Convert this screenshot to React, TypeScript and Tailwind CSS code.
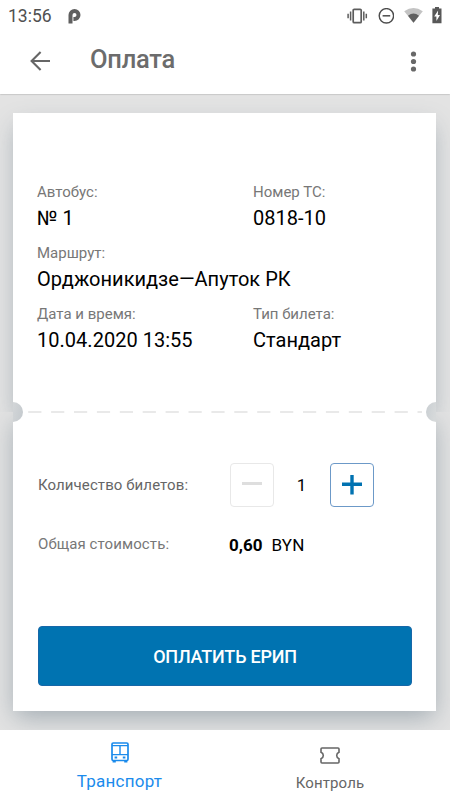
import type { ReactNode } from "react";

export default function App() {
  return (
    <div
      className="flex h-[800px] w-[450px] flex-col overflow-hidden bg-white text-black"
      style={{ fontFamily: 'Roboto, "Liberation Sans", sans-serif' }}
    >
      <StatusBar />
      <AppBar />
      <main className="min-h-0 flex-1 overflow-hidden bg-[#e3e3e3] pt-[19px] pr-[14px] pl-[13px]">
        <TicketInfo />
        <TearLine />
        <TicketPayment />
      </main>
      <BottomNav />
    </div>
  );
}

const StatusBar = () => (
  <div className="flex h-[31px] shrink-0 items-center pr-[8px] pl-[8px] text-[#505050]">
    <span className="w-[46px] text-[17.5px] leading-[20px] whitespace-nowrap">13:56</span>
    <svg className="ml-[14px]" width="13" height="16" viewBox="0 0 13 16">
      <path
        d="M2.5 15.4V7a4 4 0 1 1 4 4H5.4"
        fill="none"
        stroke="#5f5f5f"
        strokeWidth="4"
      />
    </svg>
    <div className="ml-auto flex items-center">
      <svg width="21" height="16" viewBox="0 0 21 16">
        <rect x="6.2" y="1.3" width="8" height="13.4" rx="1" fill="none" stroke="#5c5c5c" strokeWidth="1.7" />
        <path d="M1.1 5.7v4.6M3.6 3.4v9.2M16.8 3.4v9.2M19.3 5.7v4.6" stroke="#5c5c5c" strokeWidth="1.5" />
      </svg>
      <svg className="ml-[10px]" width="16" height="16" viewBox="0 0 16 16">
        <circle cx="8.4" cy="7.8" r="7.2" fill="none" stroke="#4c4c4c" strokeWidth="1.4" />
        <path d="M4.6 7.8h7.6" stroke="#4c4c4c" strokeWidth="1.5" />
      </svg>
      <svg className="ml-[9px]" width="20" height="16" viewBox="0 0 20 16">
        <path d="M10.5 14.8 1.2 3.2Q10.5-3.2 19.8 3.2Z" fill="#c3c3c3" />
        <path d="M10.5 14.8 5 7.8Q10.5 3.2 16 7.8Z" fill="#606060" />
      </svg>
      <svg className="ml-[9px]" width="10" height="17" viewBox="0 0 10 17">
        <path d="M3 0h4v1.6h2.5v14.6H0.4V1.6H3Z" fill="#585858" />
        <path d="M6.1 3.6 2.2 9.4h2.2v4.5L8 7.9H5.8Z" fill="#fff" />
      </svg>
    </div>
  </div>
);

const AppBar = () => (
  <header className="z-10 flex h-[63px] shrink-0 items-center bg-white pb-[3px] pl-[30px] shadow-[0_0.5px_1.5px_rgba(0,0,0,0.28)]">
    <svg width="21" height="20" viewBox="0 0 21 20">
      <path d="M20 10H1.8M10.6 1 1.6 10l9 9" fill="none" stroke="#666" strokeWidth="2.1" />
    </svg>
    <h1 className="mb-[4px] ml-[39px] text-[25.5px] leading-[30px] font-medium tracking-[-0.25px] text-[#6c6c6c]">
      Оплата
    </h1>
    <svg className="ml-auto mr-[33px]" width="7" height="21" viewBox="0 0 7 21">
      <circle cx="3.5" cy="3" r="2.6" fill="#686868" />
      <circle cx="3.5" cy="10.5" r="2.6" fill="#686868" />
      <circle cx="3.5" cy="18" r="2.6" fill="#686868" />
    </svg>
  </header>
);

// clip-path keeps each half's shadow off the other half
const TicketInfo = () => (
  <section className="h-[299px] bg-white pt-[69px] pl-[24px] shadow-[0_10px_22px_-3px_rgba(95,115,130,0.45)] [clip-path:inset(-30px_-30px_0_-30px)]">
    <div className="grid grid-cols-[216px_1fr] gap-y-[9px]">
      <Field label="Автобус:">№ 1</Field>
      <Field label="Номер ТС:">0818-10</Field>
      <div className="col-span-2">
        <Field label="Маршрут:">Орджоникидзе—Апуток РК</Field>
      </div>
      <Field label="Дата и время:">10.04.2020 13:55</Field>
      <Field label="Тип билета:">Стандарт</Field>
    </div>
  </section>
);

const Field = ({ label, children }: { label: string; children: ReactNode }) => (
  <div className="h-[52px] whitespace-nowrap">
    <div className="text-[15px] leading-[20px] text-[#777]">{label}</div>
    <div className="mt-[2px] text-[20px] leading-[28px] tracking-[0.02px]">{children}</div>
  </div>
);

const TearLine = () => (
  <div className="relative z-10 h-0">
    <svg className="absolute top-[-11px] left-0" width="423" height="22" viewBox="0 0 423 22">
      <defs>
        <linearGradient id="notchLeft" x1="0" x2="1" y1="0" y2="0.4">
          <stop offset="0" stopColor="#d3d6d8" />
          <stop offset="1" stopColor="#c6cbcf" />
        </linearGradient>
        <linearGradient id="notchRight" x1="0" x2="1" y1="0" y2="0.4">
          <stop offset="0" stopColor="#c9ced2" />
          <stop offset="1" stopColor="#d6d9da" />
        </linearGradient>
      </defs>
      <path d="M15.2 11H409" stroke="#e9e9e9" strokeWidth="2" strokeDasharray="13.2 9.7" />
      <path d="M0 1a10 10 0 0 1 0 20Z" fill="url(#notchLeft)" />
      <path d="M423 1a10 10 0 0 0 0 20Z" fill="url(#notchRight)" />
    </svg>
  </div>
);

const TicketPayment = () => (
  <section className="h-[299px] bg-white pt-[51px] pl-[25px] shadow-[0_8px_24px_-2px_rgba(95,115,130,0.5)] [clip-path:inset(0_-30px_-40px_-30px)]">
    <div className="flex h-[44px] items-center">
      <span className="w-[191.5px] text-[15px] leading-[20px] tracking-[0.1px] text-[#666]">
        Количество билетов:
      </span>
      <button className="flex size-[44px] items-center justify-center rounded-[4px] border border-[#e8e8e8]">
        <svg width="20" height="20" viewBox="0 0 20 20">
          <path d="M0 8.5h20" stroke="#dedede" strokeWidth="3" />
        </svg>
      </button>
      <span className="w-[56px] text-center text-[17px] leading-[20px]">1</span>
      <button className="flex size-[44px] items-center justify-center rounded-[4px] border border-[#6c99c8]">
        <svg width="20" height="20" viewBox="0 0 20 20">
          <path d="M0 9.2h20M10 -0.8v20.3" stroke="#0072b1" strokeWidth="3.4" />
        </svg>
      </button>
    </div>

    <div className="mt-[27px] flex h-[20px] items-center">
      <span className="w-[191px] text-[15px] leading-[20px] tracking-[0.1px] text-[#777]">
        Общая стоимость:
      </span>
      <span className="mt-[2px] text-[17px] leading-[20px] font-bold">0,60</span>
      <span className="mt-[2px] ml-[9px] text-[17px] leading-[20px] tracking-[0.2px]">BYN</span>
    </div>

    <button className="mt-[72px] block h-[60px] w-[374px] rounded-[4px] border border-[#1767a8] bg-[#0073b1] pt-[1px] text-[18px] font-medium tracking-[-0.2px] text-white">
      ОПЛАТИТЬ ЕРИП
    </button>
  </section>
);

const BottomNav = () => (
  <nav className="z-10 flex h-[70px] shrink-0 bg-white">
    <a className="flex w-[239px] flex-col items-center pt-[12px] text-[#1b8bec]">
      <svg width="18" height="21" viewBox="0 0 18 21" fill="none" stroke="currentColor">
        <rect x="1" y="1" width="16" height="17.5" rx="1.2" strokeWidth="1.7" />
        <path d="M1 3.6h16M1 12.6h16M9 3.6v9" strokeWidth="1.4" />
        <path d="M3.6 15.5h2.6M11.8 15.5h2.6" strokeWidth="2" />
        <path d="M1.6 19.6h3.2M13.2 19.6h3.2" strokeWidth="2" />
      </svg>
      <span className="mt-[8px] text-[17px] leading-[20px] tracking-[0.25px]">Транспорт</span>
    </a>
    <a className="flex w-[182px] flex-col items-center pt-[17px] text-[#666]">
      <svg width="20" height="17" viewBox="0 0 20 17" fill="none" stroke="currentColor">
        <path
          d="M2 1h16q1 0 1 1v3.2q-2.3 1-2.3 3.3t2.3 3.3V15q0 1-1 1H2q-1 0-1-1v-3.2q2.3-1 2.3-3.3T1 5.2V2q0-1 1-1Z"
          strokeWidth="1.6"
        />
      </svg>
      <span className="mt-[9px] text-[15px] leading-[20px] tracking-[0.1px]">Контроль</span>
    </a>
  </nav>
);
